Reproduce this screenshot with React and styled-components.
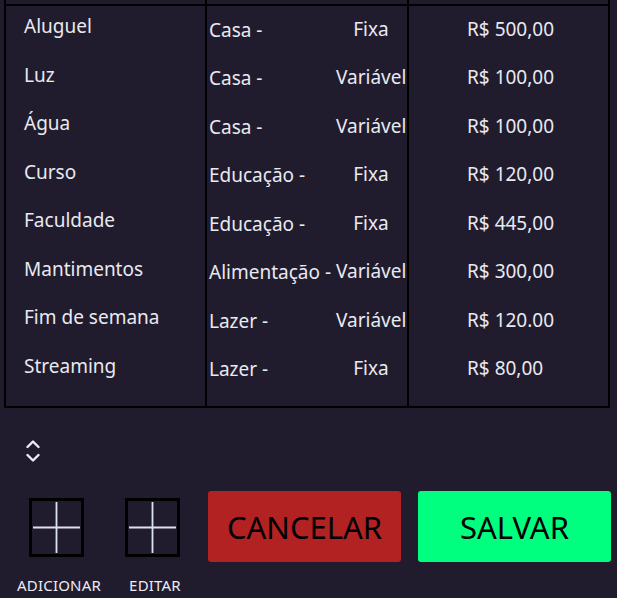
import styled, { createGlobalStyle } from "styled-components";

const expenses = [
  { name: "Aluguel", category: "Casa -", type: "Fixa", value: "R$ 500,00" },
  { name: "Luz", category: "Casa -", type: "Variável", value: "R$ 100,00" },
  { name: "Água", category: "Casa -", type: "Variável", value: "R$ 100,00" },
  { name: "Curso", category: "Educação -", type: "Fixa", value: "R$ 120,00" },
  { name: "Faculdade", category: "Educação -", type: "Fixa", value: "R$ 445,00" },
  { name: "Mantimentos", category: "Alimentação -", type: "Variável", value: "R$ 300,00" },
  { name: "Fim de semana", category: "Lazer -", type: "Variável", value: "R$ 120.00" },
  { name: "Streaming", category: "Lazer -", type: "Fixa", value: "R$ 80,00" },
];

const PlusIcon = () => (
  <svg width="49" height="53" viewBox="0 0 49 53">
    <path d="M1 26.5 H48 M24.5 1 V52" stroke="#dde3ec" strokeWidth="1.8" fill="none" />
  </svg>
);

const SortIcon = () => (
  <svg width="14" height="24" viewBox="0 0 14 24">
    <path
      d="M1.5 8 L7 2.5 L12.5 8 M1.5 16 L7 21.5 L12.5 16"
      stroke="#ecebf2"
      strokeWidth="2.4"
      fill="none"
      strokeLinecap="round"
      strokeLinejoin="round"
    />
  </svg>
);

const App = () => {
  return (
    <>
      <GlobalStyle />
      <Page>
        <Table>
          <Column $width="201px">
            <HeaderCell />
            {expenses.map((e) => (
              <NameCell key={e.name}>{e.name}</NameCell>
            ))}
          </Column>
          <Column $width="202px">
            <HeaderCell />
            {expenses.map((e) => (
              <CategoryCell key={e.name}>
                <Category>{e.category}</Category>
                <Type>{e.type}</Type>
              </CategoryCell>
            ))}
          </Column>
          <Column $last>
            <HeaderCell />
            {expenses.map((e) => (
              <ValueCell key={e.name}>{e.value}</ValueCell>
            ))}
          </Column>
        </Table>

        <Sorter>
          <SortIcon />
        </Sorter>

        <BottomRow>
          <Tools>
            <ToolGroup $width="84px">
              <ToolBox>
                <PlusIcon />
              </ToolBox>
              <ToolLabel>ADICIONAR</ToolLabel>
            </ToolGroup>
            <ToolGroup $width="56px">
              <ToolBox>
                <PlusIcon />
              </ToolBox>
              <ToolLabel>EDITAR</ToolLabel>
            </ToolGroup>
          </Tools>
          <Actions>
            <ActionButton $bg="#b22222">CANCELAR</ActionButton>
            <ActionButton $bg="#00ff7f">SALVAR</ActionButton>
          </Actions>
        </BottomRow>
      </Page>
    </>
  );
};

export default App;

const GlobalStyle = createGlobalStyle`
  html, body {
    margin: 0;
    background: #201c2e;
  }
  body {
    font-family: "Noto Sans", "Open Sans", sans-serif;
    color: #e9e9f0;
  }
`;

const Page = styled.div`
  width: 617px;
  height: 598px;
  overflow: hidden;
  box-sizing: border-box;
  padding-left: 4px;
`;

const Table = styled.div`
  width: 606px;
  display: flex;
  box-sizing: border-box;
  border: 2px solid #000;
  border-top: none;
  padding-bottom: 0;
`;

const Column = styled.div`
  box-sizing: border-box;
  width: ${(p) => p.$width || "auto"};
  flex: ${(p) => (p.$width ? "none" : "1")};
  border-right: ${(p) => (p.$last ? "none" : "2px solid #000")};
  display: flex;
  flex-direction: column;
  padding-bottom: 12px;
`;

const HeaderCell = styled.div`
  height: 4px;
  border-bottom: 2px solid #000;
`;

const RowCell = styled.div`
  box-sizing: border-box;
  height: 48.5px;
  font-size: 19px;
  line-height: 24px;
  white-space: nowrap;
`;

const NameCell = styled(RowCell)`
  padding: 8px 0 0 18px;
`;

const CategoryCell = styled(RowCell)`
  display: flex;
  align-items: flex-start;
  padding-top: 10.7px;
`;

const Category = styled.span`
  flex: 1;
  padding-left: 2px;
  margin-top: 1.3px;
`;

const Type = styled.span`
  width: 70px;
  text-align: center;
  margin-right: 1px;
`;

const ValueCell = styled(RowCell)`
  padding: 10.7px 0 0 58px;
`;

const Sorter = styled.div`
  margin-top: 31px;
  padding-left: 22px;
  height: 24px;
  svg {
    display: block;
  }
`;

const BottomRow = styled.div`
  display: flex;
  align-items: flex-start;
  gap: 25px;
  margin-top: 28px;
  padding-left: 13px;
`;

const Tools = styled.div`
  display: flex;
  gap: 26px;
`;

const ToolGroup = styled.div`
  width: ${(p) => p.$width};
  display: flex;
  flex-direction: column;
  align-items: center;
`;

const ToolBox = styled.div`
  box-sizing: border-box;
  width: 55px;
  height: 59px;
  margin-top: 7px;
  margin-right: 5px;
  border: 3px solid #000;
  display: flex;
  align-items: center;
  justify-content: center;
  svg {
    display: block;
  }
`;

const ToolLabel = styled.span`
  margin-top: 19px;
  font-size: 15px;
  line-height: 18px;
  letter-spacing: 0.2px;
  white-space: nowrap;
  color: #ecebf2;
`;

const Actions = styled.div`
  display: flex;
  gap: 17px;
`;

const ActionButton = styled.button`
  width: 193px;
  height: 71px;
  border: none;
  border-radius: 3px;
  background: ${(p) => p.$bg};
  color: #000;
  font-family: "Noto Sans", "Open Sans", sans-serif;
  font-size: 31px;
  padding: 0;
  display: flex;
  align-items: center;
  justify-content: center;
  cursor: pointer;
`;
